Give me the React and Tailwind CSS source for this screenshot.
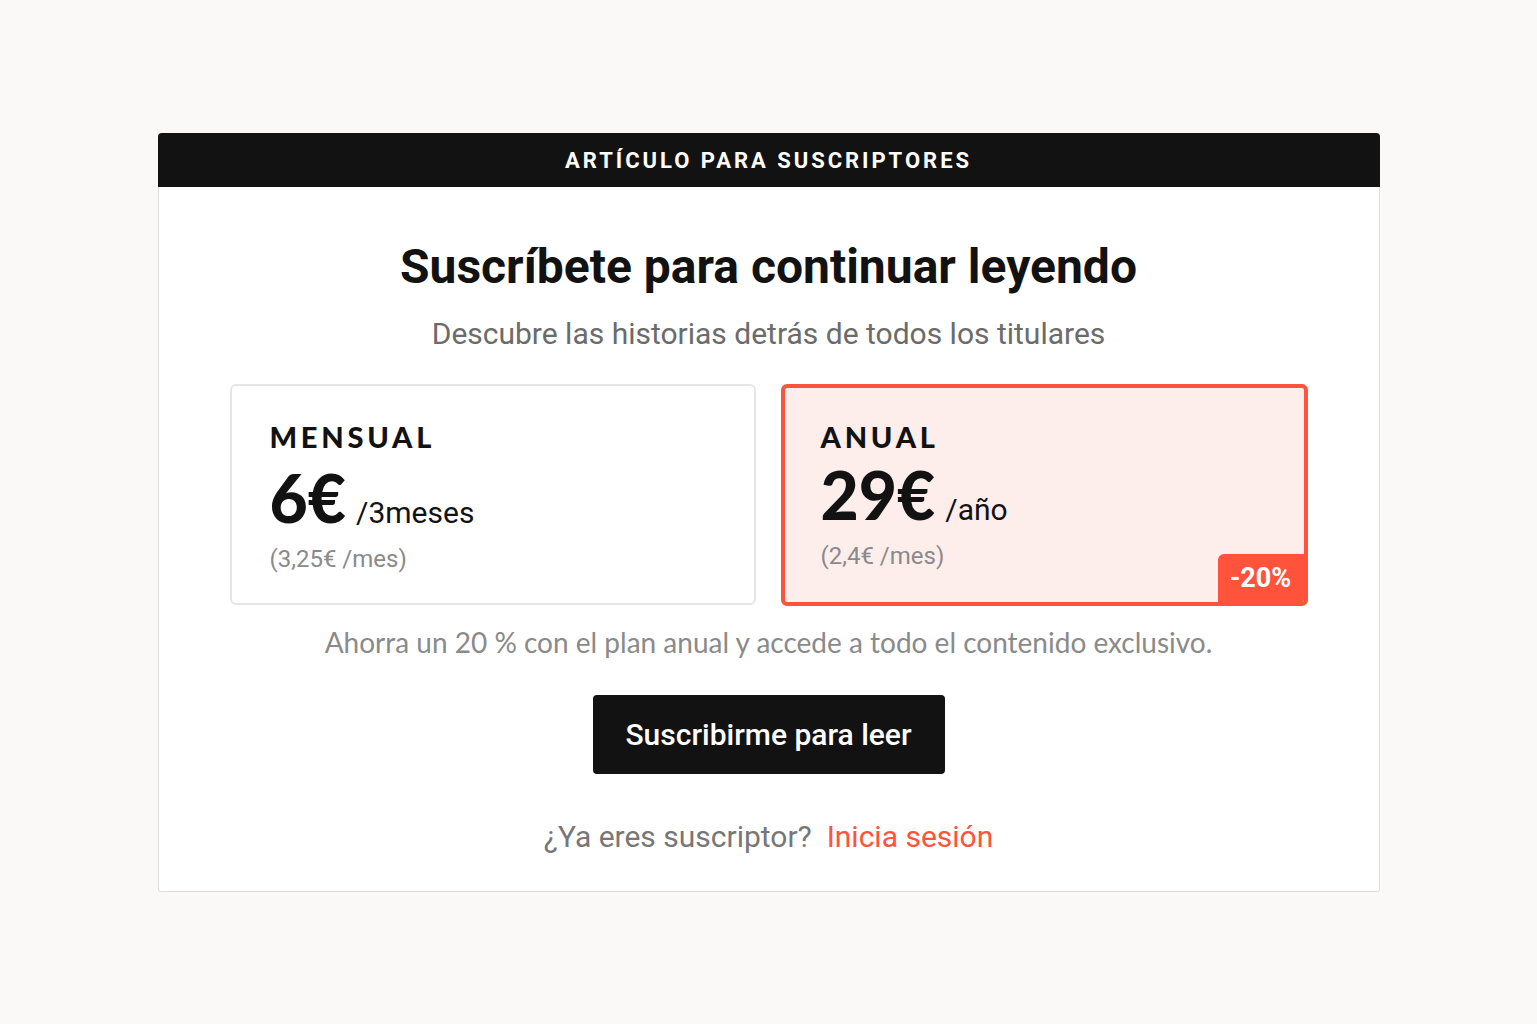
export default function App() {
  return (
    <div className="min-h-[1024px] w-full bg-[#faf9f7] pt-[133px]" style={{ fontFamily: 'Roboto, "Noto Sans", sans-serif' }}>
      <div className="mx-auto w-[1222px] rounded-[3px] border border-[#dedede] bg-white">
        <div className="-mx-px -mt-px flex h-[54px] items-center justify-center rounded-t-[4px] bg-[#121212]">
          <span className="text-[22px] font-bold tracking-[0.135em] text-white">ARTÍCULO PARA SUSCRIPTORES</span>
        </div>
        <div className="flex flex-col items-center pt-[52px] pb-[34px]">
          <h1 className="text-[48px] font-bold leading-[56px] text-[#121212]">Suscríbete para continuar leyendo</h1>
          <p className="mt-[21px] text-[30px] leading-[36px] text-[#6b6b6b]">Descubre las historias detrás de todos los titulares</p>
          <div className="mt-[32px] flex gap-[25px]">
            <div className="h-[221px] w-[526px] rounded-[6px] border-2 border-[#e6e6e6] bg-white pl-[38px] pt-[32px]">
              <div className="text-[29px] font-black leading-[38px] tracking-[0.13em] text-[#121212]" style={{ fontFamily: 'Lato, sans-serif' }}>MENSUAL</div>
              <div className="mt-[10px] flex items-baseline gap-[10px]">
                <span className="text-[66px] font-black leading-[64px] text-[#121212]" style={{ fontFamily: 'Lato, sans-serif' }}>6€</span>
                <span className="text-[30px] leading-[32px] text-[#121212]">/3meses</span>
              </div>
              <div className="mt-[14px] text-[24px] leading-[30px] text-[#8a8a8a]">(3,25€ /mes)</div>
            </div>
            <div className="relative h-[222px] w-[527px] overflow-hidden rounded-[6px] border-4 border-[#ff533b] bg-[#fdeeec] pl-[36px] pt-[30px]">
              <div className="text-[29px] font-black leading-[38px] tracking-[0.13em] text-[#121212]" style={{ fontFamily: 'Lato, sans-serif' }}>ANUAL</div>
              <div className="mt-[7px] flex items-baseline gap-[10px]">
                <span className="text-[66px] font-black leading-[64px] text-[#121212]" style={{ fontFamily: 'Lato, sans-serif' }}>29€</span>
                <span className="text-[30px] leading-[32px] text-[#121212]">/año</span>
              </div>
              <div className="mt-[14px] text-[24px] leading-[30px] text-[#8a8a8a]">(2,4€ /mes)</div>
              <div className="absolute bottom-0 right-0 flex h-[48px] w-[86px] items-center justify-center rounded-tl-[6px] bg-[#ff533b] text-[27px] font-bold text-white">-20%</div>
            </div>
          </div>
          <p className="mt-[20px] text-[28px] leading-[32px] text-[#8a8a8a]" style={{ fontFamily: 'Lato, sans-serif' }}>Ahorra un 20 % con el plan anual y accede a todo el contenido exclusivo.</p>
          <button className="mt-[37px] flex h-[79px] w-[352px] items-center justify-center rounded-[4px] bg-[#121212] text-[30px] font-medium text-white">Suscribirme para leer</button>
          <p className="mt-[43px] text-[30px] leading-[40px] text-[#777777]">
            ¿Ya eres suscriptor?&nbsp; <span className="text-[#ff533b]">Inicia sesión</span>
          </p>
        </div>
      </div>
    </div>
  );
}
